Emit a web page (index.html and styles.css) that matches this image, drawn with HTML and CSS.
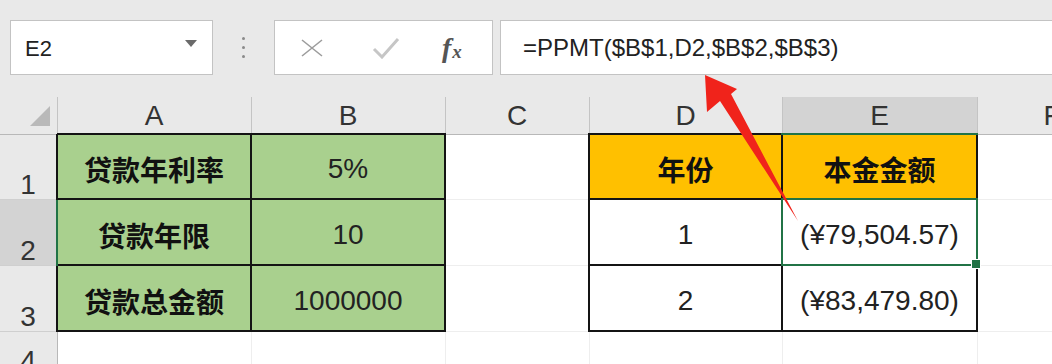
FILE: index.html
```html
<!DOCTYPE html>
<html lang="zh-CN">
<head>
	<meta charset="UTF-8">
	<title>PPMT</title>
	<link rel="stylesheet" href="styles.css">
</head>
<body>

	<div class="toolbar">
		<div class="name_box">
			<span class="name_text">E2</span>
			<span class="name_drop"></span>
		</div>
		<div class="grip"><i></i><i></i><i></i></div>
		<div class="fx_buttons">
			<svg class="btn_icon" width="24" height="20" viewBox="0 0 24 20">
				<path d="M2 2 L22 18 M22 2 L2 18" stroke="#9c9c9c" stroke-width="1.6" fill="none"/>
			</svg>
			<svg class="btn_icon" width="28" height="22" viewBox="0 0 28 22">
				<path d="M2 12 L10 20 L26 2" stroke="#c6c6c6" stroke-width="3" fill="none"/>
			</svg>
			<span class="fx_label">f<sub>x</sub></span>
		</div>
		<div class="formula_box">=PPMT($B$1,D2,$B$2,$B$3)</div>
	</div>

	<table class="sheet">
		<colgroup>
			<col class="c_rh">
			<col class="c_a">
			<col class="c_b">
			<col class="c_c">
			<col class="c_d">
			<col class="c_e">
			<col class="c_f">
		</colgroup>
		<tr class="head_row">
			<th class="corner"><span class="corner_tri"></span></th>
			<th>A</th>
			<th>B</th>
			<th>C</th>
			<th>D</th>
			<th class="sel_col">E</th>
			<th class="col_f">F</th>
		</tr>
		<tr class="r1">
			<th class="row_head">1</th>
			<td class="data green label">贷款年利率</td>
			<td class="data green">5%</td>
			<td></td>
			<td class="data orange label">年份</td>
			<td class="data orange label">本金金额</td>
			<td></td>
		</tr>
		<tr class="r2">
			<th class="row_head sel_row">2</th>
			<td class="data green label">贷款年限</td>
			<td class="data green">10</td>
			<td></td>
			<td class="data">1</td>
			<td class="data selected">(¥79,504.57)<span class="fill_handle"></span></td>
			<td></td>
		</tr>
		<tr class="r3">
			<th class="row_head">3</th>
			<td class="data green label">贷款总金额</td>
			<td class="data green">1000000</td>
			<td></td>
			<td class="data">2</td>
			<td class="data">(¥83,479.80)</td>
			<td></td>
		</tr>
		<tr class="r4">
			<th class="row_head">4</th>
			<td></td>
			<td></td>
			<td></td>
			<td></td>
			<td></td>
			<td></td>
		</tr>
	</table>

	<!-- annotation arrow drawn over the sheet -->
	<svg class="arrow" width="1052" height="364" viewBox="0 0 1052 364">
		<polygon points="705,75 737,89 731,94 798,221 720,101 707,112" fill="#f0231b"/>
	</svg>

</body>
</html>
```

FILE: styles.css
```css
html, body {
	margin: 0;
	padding: 0;
	width: 1052px;
	height: 364px;
	overflow: hidden;
	background: #fff;
	font-family: "Liberation Sans", "Noto Sans CJK SC", sans-serif;
	position: relative;
}

/* formula bar */
.toolbar {
	height: 97px;
	box-sizing: border-box;
	background: #e9e9e9;
	display: flex;
	align-items: flex-start;
	padding: 20px 0 0 10px;
}

.name_box {
	width: 203px;
	height: 55px;
	box-sizing: border-box;
	background: #fff;
	border: 1px solid #c3c3c3;
	display: flex;
	align-items: center;
	padding: 0 15px 0 14px;
}

.name_text {
	flex: 1;
	font-size: 22px;
	color: #222;
	padding-top: 2px;
}

.name_drop {
	width: 0;
	height: 0;
	border-left: 6px solid transparent;
	border-right: 6px solid transparent;
	border-top: 7px solid #6a6a6a;
	margin-top: -8px;
}

.grip {
	width: 61px;
	height: 55px;
	display: flex;
	flex-direction: column;
	align-items: center;
	justify-content: center;
	gap: 6px;
}

.grip i {
	display: block;
	width: 3px;
	height: 3px;
	border-radius: 50%;
	background: #8a8a8a;
}

.fx_buttons {
	width: 219px;
	height: 55px;
	box-sizing: border-box;
	background: #fff;
	border: 1px solid #c3c3c3;
	display: flex;
	align-items: center;
	padding: 0 0 0 25px;
	gap: 48px;
}

.fx_label {
	font-family: "Liberation Serif", serif;
	font-style: italic;
	font-weight: bold;
	font-size: 28px;
	color: #555;
	margin-left: -6px;
	line-height: 1;
}

.fx_label sub {
	font-size: 19px;
	vertical-align: -1px;
	margin-left: 1px;
}

.formula_box {
	flex: 1;
	height: 55px;
	margin-left: 7px;
	box-sizing: border-box;
	background: #fff;
	border: 1px solid #c3c3c3;
	border-right: none;
	font-size: 24px;
	color: #222;
	line-height: 53px;
	padding-left: 22px;
}

/* sheet */
.sheet {
	border-collapse: collapse;
	table-layout: fixed;
	width: 1057px;
}

.c_rh { width: 57px; }
.c_a { width: 194px; }
.c_b { width: 194px; }
.c_c { width: 144px; }
.c_d { width: 193px; }
.c_e { width: 195px; }
.c_f { width: 80px; }

.sheet th, .sheet td {
	padding: 0;
	font-size: 28px;
	font-weight: normal;
	text-align: center;
	color: #222;
	border: 1px solid #eeeeee;
}

.head_row th {
	height: 35px;
	background: #e9e9e9;
	color: #333;
	border: none;
	border-right: 1px solid #c4c4c4;
	border-bottom: 1px solid #b8b8b8;
	line-height: 35px;
	padding-top: 1px;
}

.head_row .sel_col {
	background: #d3d3d3;
	border-bottom: 2px solid #217346;
}

.head_row .col_f {
	text-align: left;
	padding-left: 66px;
	border-right: none;
}

.corner {
	position: relative;
}

.corner_tri {
	position: absolute;
	right: 7px;
	bottom: 8px;
	width: 0;
	height: 0;
	border-left: 20px solid transparent;
	border-bottom: 20px solid #b9b9b9;
}

.row_head {
	background: #e9e9e9;
	color: #333 !important;
	vertical-align: bottom;
	line-height: 28px;
	border: none !important;
	border-right: 1px solid #b8b8b8 !important;
	border-bottom: 1px solid #cfcfcf !important;
}

.row_head.sel_row {
	background: #d3d3d3;
	border-right: 2px solid #217346 !important;
}

.r1 { height: 65px; }
.r2 { height: 66px; }
.r3 { height: 66px; }
.r4 { height: 44px; }

.sheet td.data {
	border: 2px solid #141414;
	padding-top: 5px;
}

.sheet td.green {
	background: #a9d08e;
}

.sheet td.orange {
	background: #ffc000;
}

.sheet td.label {
	font-weight: bold;
	color: #111;
}

.sheet td.selected {
	position: relative;
	outline: 2px solid #217346;
	outline-offset: -1px;
}

.fill_handle {
	position: absolute;
	right: -5px;
	bottom: -5px;
	width: 8px;
	height: 8px;
	background: #217346;
	border: 1px solid #fff;
	z-index: 2;
}

.arrow {
	position: absolute;
	left: 0;
	top: 0;
	pointer-events: none;
}
```
